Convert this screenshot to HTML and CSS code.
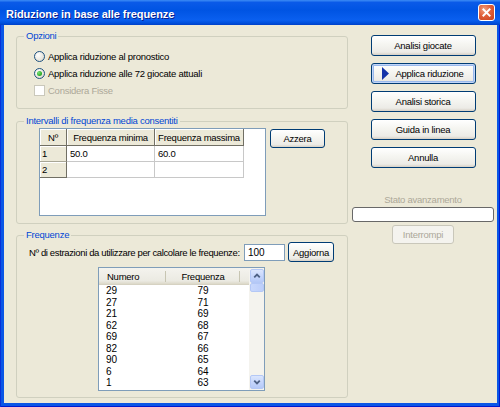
FILE: index.html
```html
<!DOCTYPE html>
<html lang="it">
<head>
<meta charset="utf-8">
<title>Riduzione in base alle frequenze</title>
<link rel="stylesheet" href="styles.css">
</head>
<body>
<div class="window">
  <div class="titlebar">
    <span class="title">Riduzione in base alle frequenze</span>
    <span class="close"><svg viewBox="0 0 17 17" width="17" height="17"><path d="M5 5 L12 12 M12 5 L5 12" stroke="#fff" stroke-width="2.2" stroke-linecap="square" fill="none"/></svg></span>
  </div>
  <div class="frame">
    <div class="client">
      <div class="leftcol">
        <div class="group g1">
          <span class="caption">Opzioni</span>
          <div class="opt"><span class="radio"></span><span>Applica riduzione al pronostico</span></div>
          <div class="opt"><span class="radio on"></span><span>Applica riduzione alle 72 giocate attuali</span></div>
          <div class="opt disabled"><span class="check"></span><span>Considera Fisse</span></div>
        </div>
        <div class="group g2">
          <span class="caption">Intervalli di frequenza media consentiti</span>
          <div class="g2row">
            <div class="grid">
              <div class="gtab">
                <div class="hc">Nº</div><div class="hc">Frequenza minima</div><div class="hc">Frequenza massima</div>
                <div class="rh">1</div><div class="dc">50.0</div><div class="dc">60.0</div>
                <div class="rh last">2</div><div class="dc"></div><div class="dc"></div>
              </div>
            </div>
            <button class="btn azzera">Azzera</button>
          </div>
        </div>
        <div class="group g3">
          <span class="caption">Frequenze</span>
          <div class="frow">
            <span class="flabel">Nº di estrazioni da utilizzare per calcolare le frequenze:</span>
            <span class="input">100</span>
            <button class="btn aggiorna">Aggiorna</button>
          </div>
          <div class="listview">
            <div class="lvmain">
              <div class="lvhead">
                <span class="h1">Numero</span><span class="h2">Frequenza</span><span class="h3"></span>
              </div>
              <div class="lvrow"><span class="c1">29</span><span class="c2">79</span></div>
              <div class="lvrow"><span class="c1">27</span><span class="c2">71</span></div>
              <div class="lvrow"><span class="c1">21</span><span class="c2">69</span></div>
              <div class="lvrow"><span class="c1">62</span><span class="c2">68</span></div>
              <div class="lvrow"><span class="c1">69</span><span class="c2">67</span></div>
              <div class="lvrow"><span class="c1">82</span><span class="c2">66</span></div>
              <div class="lvrow"><span class="c1">90</span><span class="c2">65</span></div>
              <div class="lvrow"><span class="c1">6</span><span class="c2">64</span></div>
              <div class="lvrow"><span class="c1">1</span><span class="c2">63</span></div>
            </div>
            <div class="vscroll">
              <span class="sbtn"><svg viewBox="0 0 13 13" width="13" height="13"><path d="M3.5 8 L6.5 5 L9.5 8" stroke="#4D6185" stroke-width="2" fill="none"/></svg></span>
              <span class="thumb"></span>
              <span class="track"></span>
              <span class="sbtn"><svg viewBox="0 0 13 13" width="13" height="13"><path d="M3.5 5 L6.5 8 L9.5 5" stroke="#4D6185" stroke-width="2" fill="none"/></svg></span>
            </div>
          </div>
        </div>
      </div>
      <div class="rightcol">
        <div class="btnstack">
          <button class="btn rbtn">Analisi giocate</button>
          <button class="btn rbtn def"><svg class="tri" viewBox="0 0 7 13" width="7" height="13"><polygon points="0,0 7,6.5 0,13" fill="#1634A8"/></svg><span>Applica riduzione</span></button>
          <button class="btn rbtn">Analisi storica</button>
          <button class="btn rbtn">Guida in linea</button>
          <button class="btn rbtn">Annulla</button>
        </div>
        <div class="stato">Stato avanzamento</div>
        <div class="progress"></div>
        <button class="btn dis interrompi">Interrompi</button>
      </div>
    </div>
  </div>
</div>
</body>
</html>
```
FILE: styles.css
```css
* { box-sizing: border-box; }
html, body { margin: 0; padding: 0; }
body {
  width: 500px;
  height: 407px;
  overflow: hidden;
  font-family: "Liberation Sans", Arial, sans-serif;
  font-size: 9.5px;
  letter-spacing: -0.25px;
  color: #000;
  background: #0054E3;
}
.window {
  width: 500px;
  height: 407px;
  display: flex;
  flex-direction: column;
}
.titlebar {
  height: 25px;
  flex: none;
  display: flex;
  align-items: center;
  justify-content: space-between;
  padding: 0 5px 0 6px;
  background: linear-gradient(180deg, #3d8cf5 0%, #0a5ae8 10%, #0054e3 40%, #0a5fef 80%, #0050dc 92%, #0040c8 100%);
}
.title {
  color: #fff;
  font-weight: bold;
  font-size: 11px;
  letter-spacing: -0.05px;
  margin-top: 2px;
  text-shadow: 1px 1px 0 #0a1f8c;
}
.close {
  width: 17px;
  height: 17px;
  border: 1px solid #fff;
  border-radius: 3px;
  background: radial-gradient(circle at 35% 30%, #f0a080 0%, #e0603a 45%, #c8401c 100%);
  display: flex;
  align-items: center;
  justify-content: center;
}
.close svg { width: 15px; height: 15px; }
.frame {
  flex: 1;
  display: flex;
  padding: 0 3px 4px 4px;
  background: #0a56e6;
  box-shadow: inset 1px 0 0 #0831d9, inset -1px 0 0 #0019cf, inset 0 -1px 0 #0019cf;
}
.client {
  flex: 1;
  display: flex;
  align-items: flex-start;
  background: #ECE9D8;
  padding-left: 12px;
}
.leftcol {
  width: 332px;
  padding-top: 11px;
  display: flex;
  flex-direction: column;
}
.group {
  position: relative;
  border: 1px solid #D0D0BF;
  border-radius: 3px;
}
.caption {
  position: absolute;
  top: -7px;
  left: 7px;
  padding: 0 2px;
  line-height: 12px;
  background: #ECE9D8;
  color: #0046D5;
  white-space: nowrap;
}
.g1 { height: 73px; padding: 11px 0 0 17px; }
.g2 { height: 103px; margin-top: 12px; padding: 6px 0 0 22px; }
.g3 { height: 163px; margin-top: 11px; padding: 6px 0 0 12px; }

.opt {
  height: 17px;
  display: flex;
  align-items: center;
  gap: 3px;
  white-space: nowrap;
}
.opt.disabled { color: #ACA899; }
.radio {
  width: 11px;
  height: 11px;
  border: 1px solid #1C5180;
  border-radius: 50%;
  background: radial-gradient(circle at 35% 35%, #ffffff 0%, #f0efe9 40%, #d6d2c4 100%);
  display: flex;
  align-items: center;
  justify-content: center;
}
.radio.on::after {
  content: "";
  width: 5px;
  height: 5px;
  border-radius: 50%;
  background: radial-gradient(circle at 35% 35%, #7be37a 0%, #2fae2a 60%, #1e8a1a 100%);
}
.check {
  width: 11px;
  height: 11px;
  border: 1px solid #CAC8BB;
  background: #fff;
}

.g2row {
  display: flex;
  align-items: flex-start;
  gap: 4px;
}
.grid {
  width: 227px;
  height: 88px;
  border: 1px solid #7F9DB9;
  background: #fff;
}
.gtab {
  display: grid;
  grid-template-columns: 27px 88px 89px;
  grid-template-rows: 17px 16px 16px;
}
.hc, .rh {
  background: #ECE9D8;
  border-right: 1px solid #716F64;
  border-bottom: 1px solid #716F64;
  box-shadow: inset 1px 1px 0 #fff;
  display: flex;
  align-items: center;
  white-space: nowrap;
}
.hc { justify-content: center; }
.rh { padding-left: 2px; border-bottom-color: #a8a696; }
.rh.last { border-bottom-color: #716F64; }
.dc {
  border-right: 1px solid #C8C8C8;
  border-bottom: 1px solid #C8C8C8;
  padding-left: 3px;
  display: flex;
  align-items: center;
}

.btn {
  font: inherit;
  letter-spacing: inherit;
  color: #000;
  border: 1px solid #003C74;
  border-radius: 3px;
  background: linear-gradient(180deg, #ffffff 0%, #f6f6f2 40%, #ecebe6 85%, #d6d0c5 100%);
  padding: 0;
  margin: 0;
  display: flex;
  align-items: center;
  justify-content: center;
  white-space: nowrap;
}
.btn.def {
  box-shadow: inset 0 0 0 1px #c2d6f8, inset 0 0 0 2px #9ab9ec;
  gap: 6px;
}
.btn.dis {
  border-color: #C9C7BA;
  color: #ACA899;
  background: #F4F3EE;
}
.azzera { margin-top: 1px; width: 55px; height: 19px; }

.frow {
  display: flex;
  align-items: center;
  height: 20px;
}
.flabel {
  flex: none;
  width: 213px;
  white-space: nowrap;
  letter-spacing: -0.36px;
}
.input {
  flex: none;
  margin-left: 2px;
  width: 41px;
  height: 17px;
  border: 1px solid #7F9DB9;
  background: #fff;
  padding-left: 3px;
  display: flex;
  align-items: center;
  font-size: 10px;
  letter-spacing: 0;
}
.aggiorna { flex: none; margin-left: 3px; width: 46px; height: 20px; }

.listview {
  margin: 5px 0 0 69px;
  width: 167px;
  height: 124px;
  border: 1px solid #7F9DB9;
  background: #fff;
  display: flex;
}
.lvmain { width: 150px; }
.lvhead {
  height: 17px;
  display: flex;
  background: linear-gradient(180deg, #f4f3ee 0%, #ebeae2 80%, #dcd8c8 100%);
  border-bottom: 1px solid #d6d2c2;
}
.lvhead span {
  display: flex;
  align-items: center;
  background-image: linear-gradient(#c7c5b2, #c7c5b2);
  background-repeat: no-repeat;
  background-size: 1px 11px;
  background-position: right center;
}
.lvhead .h1 { width: 67px; padding-left: 8px; }
.lvhead .h2 { width: 74px; justify-content: center; }
.lvhead .h3 { flex: 1; background-image: none; }
.lvrow {
  height: 11.5px;
  display: flex;
  align-items: center;
  font-size: 10px;
  letter-spacing: 0;
}
.lvrow .c1 { width: 67px; padding-left: 7px; }
.lvrow .c2 { width: 74px; text-align: center; }
.vscroll {
  width: 15px;
  display: flex;
  flex-direction: column;
  align-items: center;
  background: #f4f3ee;
  padding: 1px 0;
}
.sbtn {
  width: 14px;
  height: 14px;
  border: 1px solid #b4c8f6;
  border-radius: 2px;
  background: linear-gradient(180deg, #dbe6fd 0%, #c3d4fb 60%, #b5c9f7 100%);
  display: flex;
  align-items: center;
  justify-content: center;
}
.sbtn svg { width: 12px; height: 12px; }
.thumb {
  width: 14px;
  height: 9px;
  border: 1px solid #b4c8f6;
  border-radius: 2px;
  background: linear-gradient(90deg, #c9d8fc 0%, #bccefa 100%);
}
.track { flex: 1; }

.rightcol {
  width: 142px;
  margin-left: 4px;
  padding-top: 10px;
  display: flex;
  flex-direction: column;
  align-items: center;
}
.btnstack {
  display: flex;
  flex-direction: column;
  gap: 7px;
}
.rbtn { width: 105px; height: 21px; }
.tri { flex: none; }
.stato {
  margin-top: 26px;
  line-height: 12px;
  color: #ACA899;
}
.progress {
  margin-top: 1px;
  width: 142px;
  height: 15px;
  border: 1px solid #686868;
  border-radius: 3px;
  background: #fff;
}
.interrompi { margin-top: 3px; width: 62px; height: 19px; }
```
